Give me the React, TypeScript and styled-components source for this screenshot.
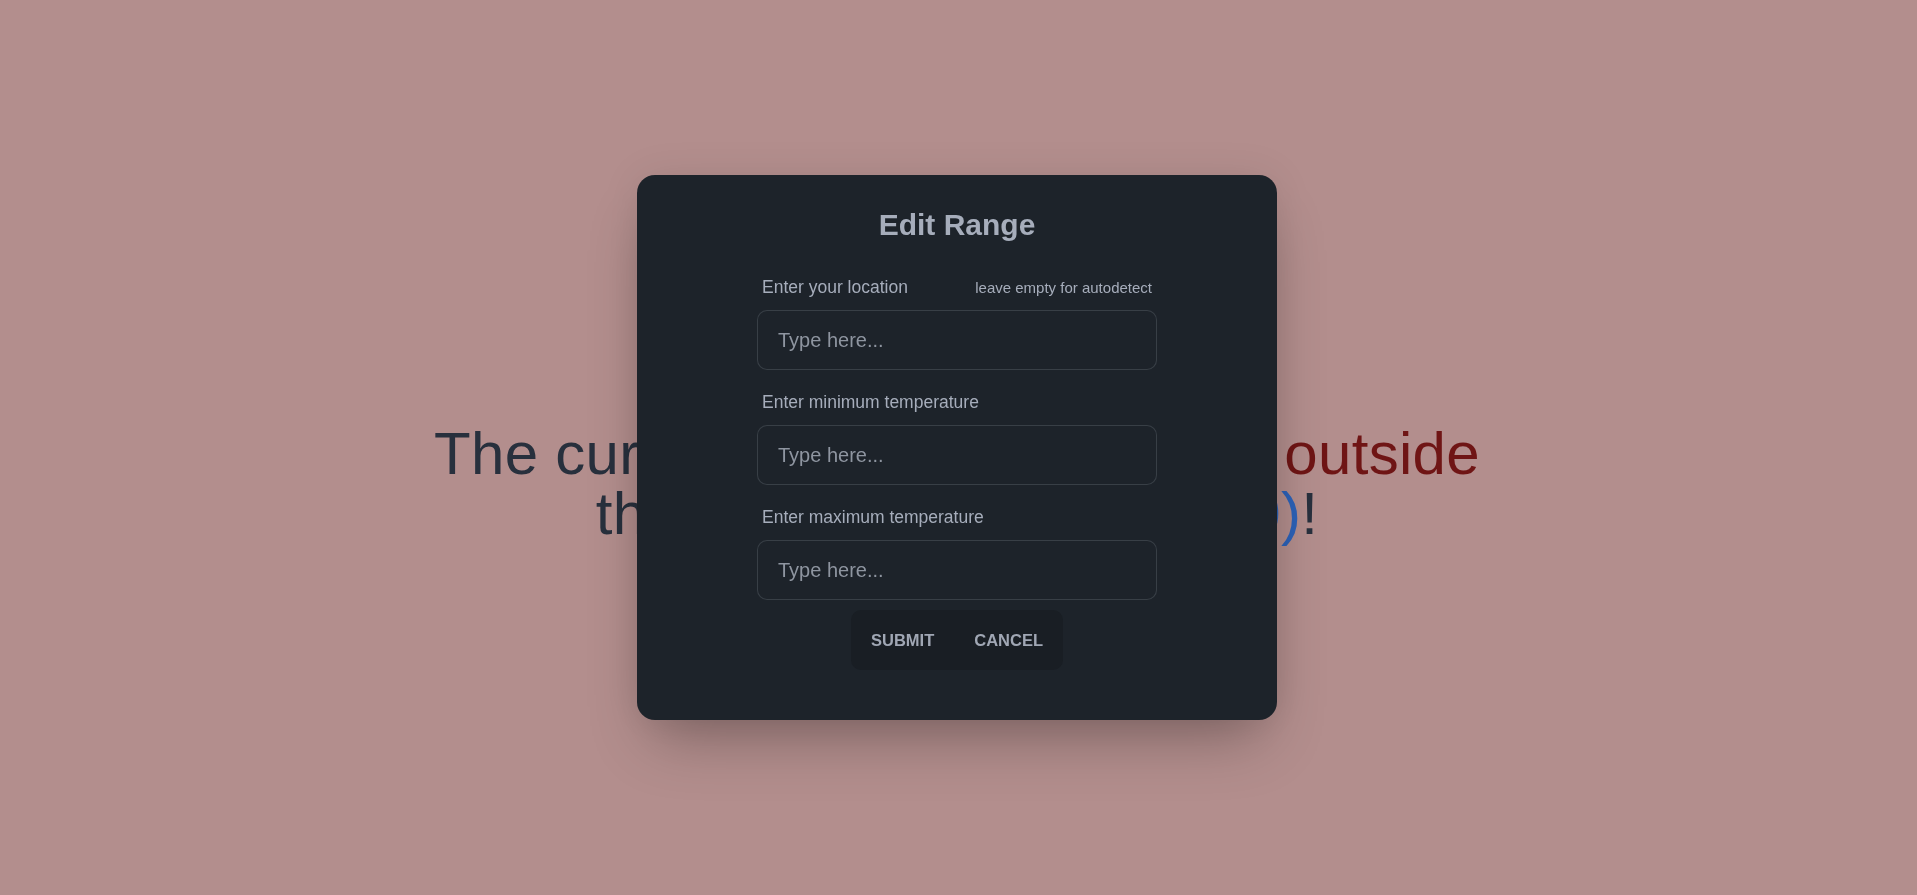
import React from 'react';
import styled, { createGlobalStyle } from 'styled-components';

const GlobalStyle = createGlobalStyle`
  * { box-sizing: border-box; }
  html, body {
    margin: 0;
    padding: 0;
    background: #b38e8d;
    font-family: "Liberation Sans", Arial, sans-serif;
  }
`;

const Page = styled.main`
  min-height: 100vh;
  display: flex;
  align-items: center;
  justify-content: center;
  padding: 72px 3px 0 0;
`;

const Message = styled.h1`
  margin: 0;
  font-size: 60px;
  line-height: 60px;
  font-weight: 400;
  letter-spacing: 0.3px;
  text-align: center;
  color: #28303d;
`;

const Tone = styled.span<{ $tone: 'hot' | 'range' }>`
  color: ${(p) => (p.$tone === 'hot' ? '#6f1515' : '#2c62b8')};
`;

const Backdrop = styled.div`
  position: fixed;
  inset: 0;
  display: flex;
  align-items: center;
  justify-content: center;
  padding-right: 3px;
`;

const ModalBox = styled.div`
  width: 640px;
  padding: 30px;
  background: #1d232a;
  border-radius: 18px;
  box-shadow: 0 31px 62px -15px rgba(0, 0, 0, 0.3), 0 0 40px rgba(0, 0, 0, 0.08);
  color: #a6adbb;
`;

const Title = styled.h3`
  margin: 0;
  font-size: 30px;
  line-height: 40px;
  font-weight: 700;
  text-align: center;
  color: #a6adbb;
`;

const Form = styled.form`
  display: flex;
  flex-direction: column;
  align-items: center;
  gap: 10px;
  padding: 20px 0;
`;

const Control = styled.div`
  width: 400px;
  display: flex;
  flex-direction: column;
`;

const LabelRow = styled.label`
  display: flex;
  justify-content: space-between;
  align-items: center;
  padding: 10px 5px;
`;

const LabelText = styled.span<{ $alt?: boolean }>`
  font-size: ${(p) => (p.$alt ? '15px' : '17.5px')};
  line-height: 25px;
  color: #a6adbb;
`;

const Input = styled.input`
  width: 100%;
  height: 60px;
  padding: 0 20px;
  font-family: inherit;
  font-size: 20px;
  color: #a6adbb;
  background: #1d232a;
  border: 1px solid rgba(166, 173, 187, 0.2);
  border-radius: 10px;
  outline: none;

  &::placeholder {
    color: #8e95a0;
  }
`;

const Join = styled.div`
  display: flex;
  border-radius: 10px;
  overflow: hidden;
  background: #191e24;
`;

const Button = styled.button`
  height: 60px;
  padding: 0 20px;
  border: none;
  background: transparent;
  font-family: inherit;
  font-size: 16.5px;
  font-weight: 700;
  text-transform: uppercase;
  color: #a0a7b4;
  cursor: pointer;
`;

const fields = [
  { label: 'Enter your location', alt: 'leave empty for autodetect' },
  { label: 'Enter minimum temperature' },
  { label: 'Enter maximum temperature' },
];

export default function App() {
  return (
    <>
      <GlobalStyle />
      <Page>
        <Message>
          The current temperature 8°C is <Tone $tone="hot">outside</Tone>
          <br />
          the range <Tone $tone="range">(5.50°C - 25.50)</Tone>!
        </Message>
      </Page>
      <Backdrop>
        <ModalBox>
          <Title>Edit Range</Title>
          <Form onSubmit={(e) => e.preventDefault()}>
            {fields.map((f) => (
              <Control key={f.label}>
                <LabelRow>
                  <LabelText>{f.label}</LabelText>
                  {f.alt && <LabelText $alt>{f.alt}</LabelText>}
                </LabelRow>
                <Input type="text" placeholder="Type here..." />
              </Control>
            ))}
            <Join>
              <Button type="submit">Submit</Button>
              <Button type="button">Cancel</Button>
            </Join>
          </Form>
        </ModalBox>
      </Backdrop>
    </>
  );
}
